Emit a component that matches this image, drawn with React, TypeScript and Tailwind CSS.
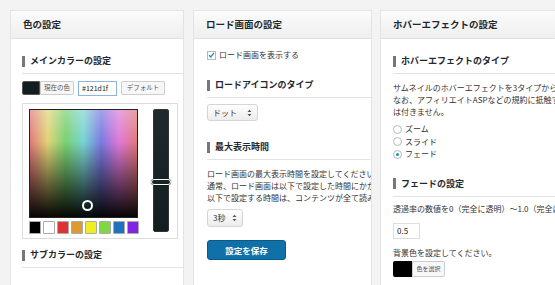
import React from "react";

const font = { fontFamily: '"Noto Sans CJK JP", "Noto Sans", sans-serif' };

function Header({ title }: { title: string }) {
  return (
    <div className="h-[28px] flex items-center pl-[12px] bg-[linear-gradient(to_bottom,#fbfbfb,#efefef)] border-b border-[#e0e0e0] text-[9.5px] font-semibold text-[#23282d] whitespace-nowrap">
      {title}
    </div>
  );
}

function Heading({ label, className = "" }: { label: string; className?: string }) {
  return (
    <div className={`flex items-center border-b border-[#e3e3e3] pb-[6px] ${className}`}>
      <span className="w-[3px] h-[11px] bg-[#73787d] mr-[5px] shrink-0" />
      <span className="text-[9px] font-bold text-[#23282d] leading-[12px] whitespace-nowrap">{label}</span>
    </div>
  );
}

function Select({ label, w }: { label: string; w: string }) {
  return (
    <div className={`${w} flex items-center justify-between px-[5px] rounded-[3px] border border-[#d5d5d5] bg-[linear-gradient(to_bottom,#ffffff,#ececec)] text-[8px] text-[#333]`}>
      <span>{label}</span>
      <svg width="5" height="8" viewBox="0 0 5 8">
        <path d="M0.5 3 L2.5 0.8 L4.5 3 Z M0.5 5 L2.5 7.2 L4.5 5 Z" fill="#555" />
      </svg>
    </div>
  );
}

const swatches = ["#000000", "#ffffff", "#dd3333", "#dd9933", "#eeee22", "#81d742", "#1e73be", "#8224e3"];

function ColorPanel() {
  return (
    <div className="w-[186px] shrink-0 pl-[10px] pt-[10px]">
      <div className="w-[174px] h-[290px] bg-white border border-[#e3e3e3] overflow-hidden">
        <Header title="色の設定" />
        <div className="pl-[11px]">
          <Heading label="メインカラーの設定" className="mt-[16px]" />
          <div className="flex items-center mt-[7px] h-[14px]">
            <span className="w-[18px] h-[14px] bg-[#121d1f] border border-[#555] rounded-l-[2px]" />
            <span className="w-[34px] h-[14px] flex items-center justify-center border border-[#ccc] bg-[#f7f7f7] text-[6.5px] text-[#555] rounded-r-[2px]">
              現在の色
            </span>
            <span className="ml-[4px] w-[39px] h-[15px] flex items-center pl-[3px] border border-[#8fb5d6] bg-white text-[7px] text-[#222]">
              #121d1f
            </span>
            <span className="ml-[4px] w-[44px] h-[14px] flex items-center justify-center border border-[#ccc] bg-[#f7f7f7] text-[6.5px] text-[#555] rounded-[2px]">
              デフォルト
            </span>
          </div>
          <div className="mt-[8px] w-[156px] h-[136px] border border-[#dcdcdc] flex pt-[5px] pl-[6px]">
            <div className="flex flex-col">
              <div className="relative w-[109px] h-[109px] border border-[#222] bg-[linear-gradient(to_bottom,rgba(255,255,255,0.3),rgba(0,0,0,0)_30%,rgba(0,0,0,0.97)),linear-gradient(to_right,#e07878,#e0d475,#78d070,#78d4d4,#7a78e0,#e078d8,#e07878)]">
                <span className="absolute left-[52px] top-[90px] w-[11px] h-[11px] rounded-full border-[2px] border-white" />
              </div>
              <div className="flex gap-[2px] mt-[3px]">
                {swatches.map((c) => (
                  <span key={c} className="w-[12px] h-[13px] border border-[#aaa] rounded-[1px]" style={{ background: c }} />
                ))}
              </div>
            </div>
            <div className="relative ml-[14px] w-[16px] h-[123px] rounded-[2px] bg-[linear-gradient(to_bottom,#1e2a2c,#121d1f)] border border-[#333]">
              <span className="absolute left-[-3px] top-[69px] w-[20px] h-[6px] rounded-full border-[1.5px] border-white bg-[#1a2426] shadow-[0_0_1px_#000]" />
            </div>
          </div>
          <Heading label="サブカラーの設定" className="mt-[10px]" />
        </div>
      </div>
    </div>
  );
}

function LoadPanel() {
  return (
    <div className="w-[188px] shrink-0 pl-[7px] pt-[10px]">
      <div className="w-[179px] h-[290px] bg-white border border-[#e3e3e3] overflow-hidden">
        <Header title="ロード画面の設定" />
        <div className="pl-[13px]">
          <div className="flex items-center mt-[11px] h-[10px]">
            <span className="w-[9px] h-[9px] border border-[#b4b9be] bg-white flex items-center justify-center">
              <svg width="8" height="8" viewBox="0 0 8 8">
                <path d="M1.2 4.2 L3.2 6.2 L6.8 1.6" stroke="#1e8cbe" strokeWidth="1.5" fill="none" />
              </svg>
            </span>
            <span className="ml-[3px] text-[8px] text-[#333] whitespace-nowrap">ロード画面を表示する</span>
          </div>
          <Heading label="ロードアイコンのタイプ" className="mt-[19px]" />
          <Select label="ドット" w="w-[51px] h-[17px] mt-[6px]" />
          <Heading label="最大表示時間" className="mt-[20px]" />
          <div className="mt-[8px] text-[8px] leading-[12px] text-[#333] whitespace-nowrap">
            <div>ロード画面の最大表示時間を設定してください。</div>
            <div>通常、ロード画面は以下で設定した時間にかかわらず</div>
            <div>以下で設定する時間は、コンテンツが全て読み込まれ</div>
          </div>
          <Select label="3秒" w="w-[36px] h-[18px] mt-[5px]" />
          <div className="mt-[13px] w-[79px] h-[20px] flex items-center justify-center rounded-[3px] bg-[#0f71a8] border border-[#0a5b8a] text-white text-[8.5px] font-bold">
            設定を保存
          </div>
        </div>
      </div>
    </div>
  );
}

function Radio({ label, on }: { label: string; on?: boolean }) {
  return (
    <div className="flex items-center h-[12.5px]">
      <span className="w-[9px] h-[9px] rounded-full border border-[#b4b9be] bg-white flex items-center justify-center">
        {on && <span className="w-[3px] h-[3px] rounded-full bg-[#1e8cbe]" />}
      </span>
      <span className="ml-[3px] text-[8px] text-[#333]">{label}</span>
    </div>
  );
}

function HoverPanel() {
  return (
    <div className="flex-1 pl-[6px] pt-[10px]">
      <div className="w-[200px] h-[290px] bg-white border border-[#e3e3e3] overflow-hidden">
        <Header title="ホバーエフェクトの設定" />
        <div className="pl-[12px]">
          <Heading label="ホバーエフェクトのタイプ" className="mt-[16px]" />
          <div className="mt-[8px] text-[8px] leading-[12px] text-[#333] whitespace-nowrap">
            <div>サムネイルのホバーエフェクトを3タイプから選択できます。</div>
            <div>なお、アフィリエイトASPなどの規約に抵触する場合の責任</div>
            <div>は付きません。</div>
          </div>
          <div className="mt-[5px]">
            <Radio label="ズーム" />
            <Radio label="スライド" />
            <Radio label="フェード" on />
          </div>
          <Heading label="フェードの設定" className="mt-[17px]" />
          <div className="mt-[6px] text-[8px] leading-[12px] text-[#333] whitespace-nowrap">
            透過率の数値を0（完全に透明）〜1.0（完全に不透明）で設定
          </div>
          <div className="mt-[8px] w-[27px] h-[16px] flex items-center pl-[3px] border border-[#ddd] bg-white text-[8px] text-[#222]">
            0.5
          </div>
          <div className="mt-[8px] text-[8px] leading-[12px] text-[#333] whitespace-nowrap">背景色を設定してください。</div>
          <div className="mt-[2px] flex items-center h-[16px]">
            <span className="w-[19px] h-[16px] bg-black rounded-l-[2px]" />
            <span className="w-[33px] h-[16px] flex items-center justify-center border border-[#ccc] bg-[#f7f7f7] text-[6px] text-[#555] rounded-r-[2px]">
              色を選択
            </span>
          </div>
        </div>
      </div>
    </div>
  );
}

export default function App() {
  return (
    <div style={font} className="w-[555px] h-[285px] overflow-hidden bg-[#f3f3f3] flex">
      <ColorPanel />
      <LoadPanel />
      <HoverPanel />
    </div>
  );
}
